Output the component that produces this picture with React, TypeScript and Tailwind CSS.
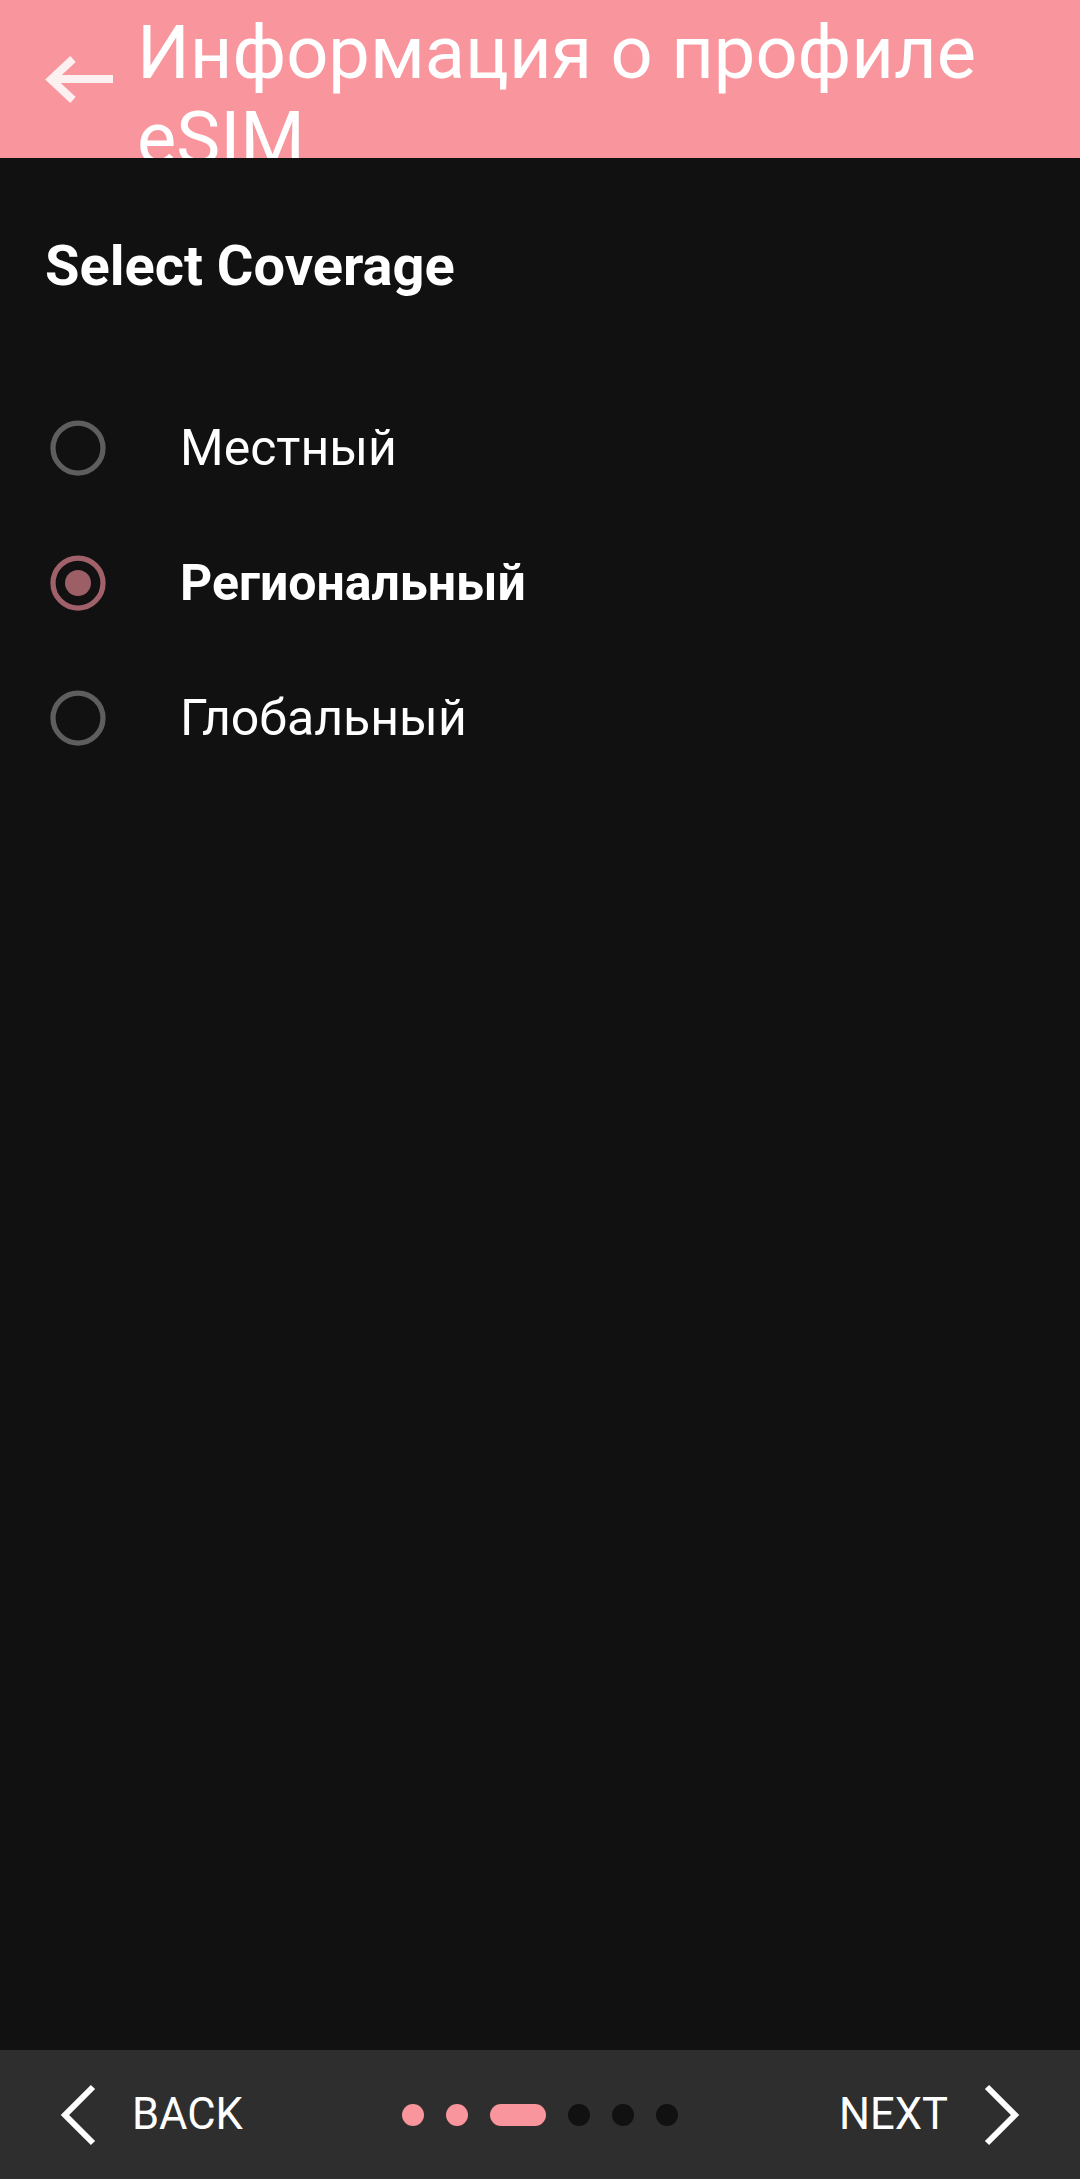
import React from "react";

const options = [
  { id: "local", label: "Местный" },
  { id: "regional", label: "Региональный" },
  { id: "global", label: "Глобальный" },
];

const Radio = ({ checked }: { checked: boolean }) => (
  <svg width="56" height="56" viewBox="0 0 56 56" className="shrink-0">
    <circle
      cx="28"
      cy="28"
      r="25"
      fill="none"
      stroke={checked ? "#a0616a" : "#5e5e5e"}
      strokeWidth="5.25"
    />
    {checked && <circle cx="28" cy="28" r="13" fill="#9c5f66" />}
  </svg>
);

export default function App() {
  const selected = "regional";
  const step = 2;

  return (
    <div
      className="flex h-[2179px] w-[1080px] flex-col bg-[#111111] text-white"
      style={{ fontFamily: "Roboto, 'Noto Sans', sans-serif" }}
    >
      {/* Toolbar */}
      <div className="flex h-[158px] shrink-0 overflow-hidden bg-[#f9959c]">
        <svg width="137" height="158" viewBox="0 0 137 158" className="shrink-0">
          <g stroke="#fdf0f1" strokeWidth="8" fill="none" strokeLinecap="butt" strokeLinejoin="miter">
            <line x1="51" y1="79" x2="113" y2="79" />
            <polyline points="73,59 51,79.5 73,100" />
          </g>
        </svg>
        <div className="pt-[10px] text-[74px] leading-[86px] font-normal text-white">
          Информация о профиле eSIM
        </div>
      </div>

      {/* Content */}
      <div className="flex-1 px-[45px]">
        <h1 className="pt-[76px] text-[56px] leading-[65px] font-bold">Select Coverage</h1>
        <div className="mt-[81px] flex flex-col">
          {options.map((o) => {
            const checked = o.id === selected;
            return (
              <div key={o.id} className="flex h-[135px] items-center">
                <div className="ml-[5px]">
                  <Radio checked={checked} />
                </div>
                <span
                  className={
                    checked
                      ? "ml-[74px] text-[50px] leading-none font-bold"
                      : "ml-[74px] text-[50px] leading-none font-normal"
                  }
                >
                  {o.label}
                </span>
              </div>
            );
          })}
        </div>
      </div>

      {/* Bottom navigation */}
      <div className="flex h-[129px] shrink-0 items-center bg-[#2e2e2e]">
        <div className="flex flex-1 items-center pl-[58px]">
          <svg width="40" height="64" viewBox="0 0 40 64">
            <polyline points="35,4 7,32 35,60" fill="none" stroke="white" strokeWidth="6" />
          </svg>
          <span className="ml-[34px] text-[43.5px] leading-none">BACK</span>
        </div>
        <div className="flex items-center gap-[22px]">
          {[0, 1, 2, 3, 4, 5].map((i) => (
            <div
              key={i}
              className={
                i === step
                  ? "h-[22px] w-[56px] rounded-full bg-[#f9959c]"
                  : i < step
                  ? "h-[22px] w-[22px] rounded-full bg-[#f9959c]"
                  : "h-[22px] w-[22px] rounded-full bg-[#111111]"
              }
            />
          ))}
        </div>
        <div className="flex flex-1 items-center justify-end pr-[58px]">
          <span className="mr-[34px] text-[43.5px] leading-none">NEXT</span>
          <svg width="40" height="64" viewBox="0 0 40 64">
            <polyline points="5,4 33,32 5,60" fill="none" stroke="white" strokeWidth="6" />
          </svg>
        </div>
      </div>
    </div>
  );
}
